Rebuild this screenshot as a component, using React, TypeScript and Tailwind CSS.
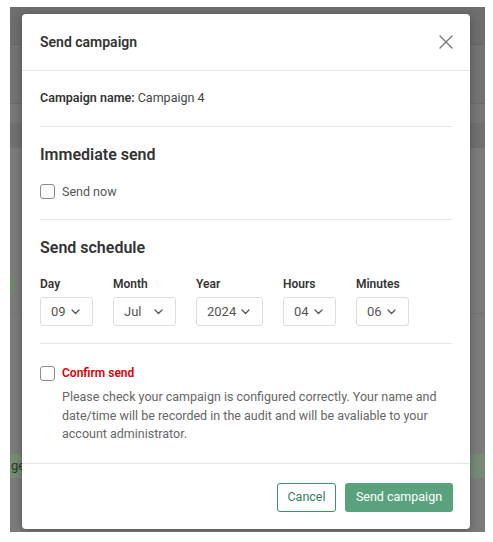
import React from 'react'

const font = { fontFamily: 'Roboto, "Noto Sans", sans-serif' }

function Chevron() {
  return (
    <svg width="9" height="6" viewBox="0 0 9 6" fill="none">
      <path d="M1 1l3.5 3.5L8 1" stroke="#555" strokeWidth="1.3" strokeLinecap="round" strokeLinejoin="round" />
    </svg>
  )
}

function Checkbox() {
  return <span className="block w-[15px] h-[15px] shrink-0 rounded-[3px] border border-[#8a8a8a] bg-white" />
}

const fields = [
  { label: 'Day', value: '09', w: 'w-[53px]' },
  { label: 'Month', value: 'Jul', w: 'w-[63px]' },
  { label: 'Year', value: '2024', w: 'w-[67px]' },
  { label: 'Hours', value: '04', w: 'w-[53px]' },
  { label: 'Minutes', value: '06', w: 'w-[53px]' },
]

export default function App() {
  return (
    <div className="w-[493px] h-[542px] bg-white pl-[10px] pt-[7px] overflow-hidden" style={font}>
      <div className="relative w-[475px] h-[525px] bg-[#7b7b7b] overflow-hidden">
        {/* page underneath the overlay */}
        <div className="h-[38px] bg-[#6e6e6e] border-b border-[#666]" />
        <div className="h-[59px] bg-[#737373] border-b border-[#6a6a6a]" />
        <div className="h-[19px] bg-[#777]" />
        <div className="h-[25px] bg-[#707070]" />
        <div className="h-[125px] relative">
          <div className="absolute left-[-14px] top-[126px] w-[20px] h-[20px] rounded-full bg-[#6f8470]" />
        </div>
        <div className="h-[41px] border-b border-[#747474]" />
        <div className="h-[140px]" />
        <div className="h-[24px] bg-[#768a74] text-[13px] leading-[24px] text-[#2c3a2c] pl-[1px]">ge</div>

        {/* modal */}
        <div className="absolute left-[12px] top-[7px] w-[448px] h-[515px] bg-white rounded-[4px] shadow-[0_2px_8px_rgba(0,0,0,0.3)] flex flex-col">
          <div className="h-[57px] shrink-0 flex items-center justify-between pl-[18px] pr-[17px] border-b border-[#e6e6e6]">
            <h1 className="text-[14px] font-semibold text-[#333]">Send campaign</h1>
            <svg width="14" height="14" viewBox="0 0 14 14" fill="none">
              <path d="M1 1l12 12M13 1L1 13" stroke="#777" strokeWidth="1.4" strokeLinecap="round" />
            </svg>
          </div>

          <div className="px-[18px] flex-1">
            <div className="pt-[19px] pb-[20px] border-b border-[#e6e6e6] text-[12.5px] leading-[16px] text-[#444]">
              <span className="font-semibold text-[#333]">Campaign name:</span> Campaign 4
            </div>

            <div className="pt-[18px] pb-[20px] border-b border-[#e6e6e6]">
              <h2 className="text-[16px] leading-[20px] font-semibold text-[#333]">Immediate send</h2>
              <label className="mt-[19px] flex items-center gap-[7px]">
                <Checkbox />
                <span className="text-[12.5px] leading-[15px] text-[#555]">Send now</span>
              </label>
            </div>

            <div className="pt-[18px] pb-[17px] border-b border-[#e6e6e6]">
              <h2 className="text-[16px] leading-[20px] font-semibold text-[#333]">Send schedule</h2>
              <div className="mt-[18px] flex gap-[20px]">
                {fields.map((f) => (
                  <div key={f.label} className={`${f.w} flex flex-col gap-[5px]`}>
                    <span className="text-[12px] leading-[16px] font-semibold text-[#333]">{f.label}</span>
                    <div className="h-[29px] flex items-center justify-between pl-[10px] pr-[12px] border border-[#ddd] rounded-[3px] text-[13px] text-[#555]">
                      <span>{f.value}</span>
                      <Chevron />
                    </div>
                  </div>
                ))}
              </div>
            </div>

            <div className="pt-[22px]">
              <label className="flex items-center gap-[7px]">
                <Checkbox />
                <span className="text-[12px] leading-[15px] font-semibold text-[#e00000]">Confirm send</span>
              </label>
              <p className="mt-[7px] pl-[22px] pr-[4px] text-[12.5px] leading-[18.5px] text-[#666]">
                Please check your campaign is configured correctly. Your name and date/time will be recorded in the audit and will be avaliable to your account administrator.
              </p>
            </div>
          </div>

          <div className="h-[66px] shrink-0 border-t border-[#e6e6e6] flex items-center justify-end gap-[9px] pr-[17px] pt-[1px]">
            <button className="h-[29px] w-[59px] rounded-[3px] border border-[#3f9068] text-[12.5px] text-[#2f7f58] bg-white">
              Cancel
            </button>
            <button className="h-[29px] w-[108px] rounded-[3px] bg-[#5aa17e] text-[12.5px] text-white">
              Send campaign
            </button>
          </div>
        </div>
      </div>
    </div>
  )
}
